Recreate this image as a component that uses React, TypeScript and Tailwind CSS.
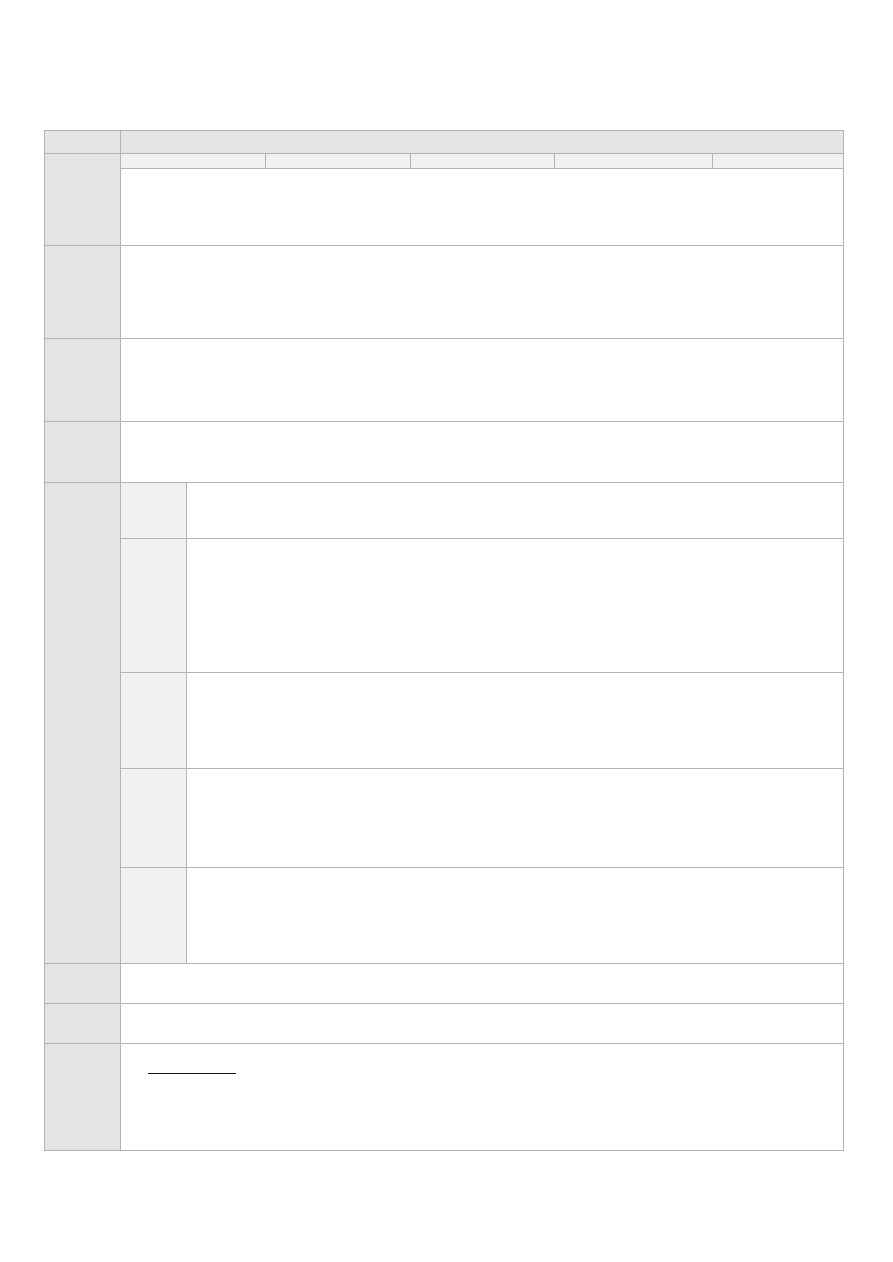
const line = "border-[#b3b3b3]";

const subColumns = [145, 145, 144, 158];

const nestedRows = [56, 134, 96, 99];

function Row({ height, children }: { height: string; children?: React.ReactNode }) {
  return (
    <div className={`flex border-b ${line} ${height}`}>
      <div className={`w-[76px] shrink-0 border-r ${line} bg-[#e4e4e4]`} />
      <div className={`flex-1 border-r ${line} bg-white`}>{children}</div>
    </div>
  );
}

export default function App() {
  return (
    <div className="min-h-[1262px] w-[893px] bg-white pt-[130px] pl-[44px]">
      <div className={`w-[800px] border-t border-l ${line}`}>
        {/* header */}
        <div className={`flex h-[23px] border-b ${line}`}>
          <div className={`w-[76px] shrink-0 border-r ${line} bg-[#e4e4e4]`} />
          <div className={`flex-1 border-r ${line} bg-[#e4e4e4]`} />
        </div>

        <Row height="h-[92px]">
          <div className={`flex h-[15px] border-b ${line} bg-[#f1f1f1]`}>
            {subColumns.map((w, i) => (
              <div
                key={i}
                className={`shrink-0 border-r ${line}`}
                style={{ width: w }}
              />
            ))}
            <div className="flex-1" />
          </div>
        </Row>

        <Row height="h-[93px]" />
        <Row height="h-[83px]" />
        <Row height="h-[61px]" />

        {/* nested block */}
        <div className={`flex h-[481px] border-b ${line}`}>
          <div className={`w-[76px] shrink-0 border-r ${line} bg-[#e4e4e4]`} />
          <div className={`flex flex-1 flex-col border-r ${line}`}>
            {nestedRows.map((h, i) => (
              <div key={i} className={`flex border-b ${line}`} style={{ height: h }}>
                <div className={`w-[66px] shrink-0 border-r ${line} bg-[#f1f1f1]`} />
                <div className="flex-1 bg-white" />
              </div>
            ))}
            <div className="flex flex-1">
              <div className={`w-[66px] shrink-0 border-r ${line} bg-[#f1f1f1]`} />
              <div className="flex-1 bg-white" />
            </div>
          </div>
        </div>

        <Row height="h-[40px]" />
        <Row height="h-[40px]" />

        <Row height="h-[107px]">
          <div className="pt-[29px] pl-[27px]">
            <a className="block h-px w-[88px] bg-[#0000cc]" />
          </div>
        </Row>
      </div>
    </div>
  );
}
